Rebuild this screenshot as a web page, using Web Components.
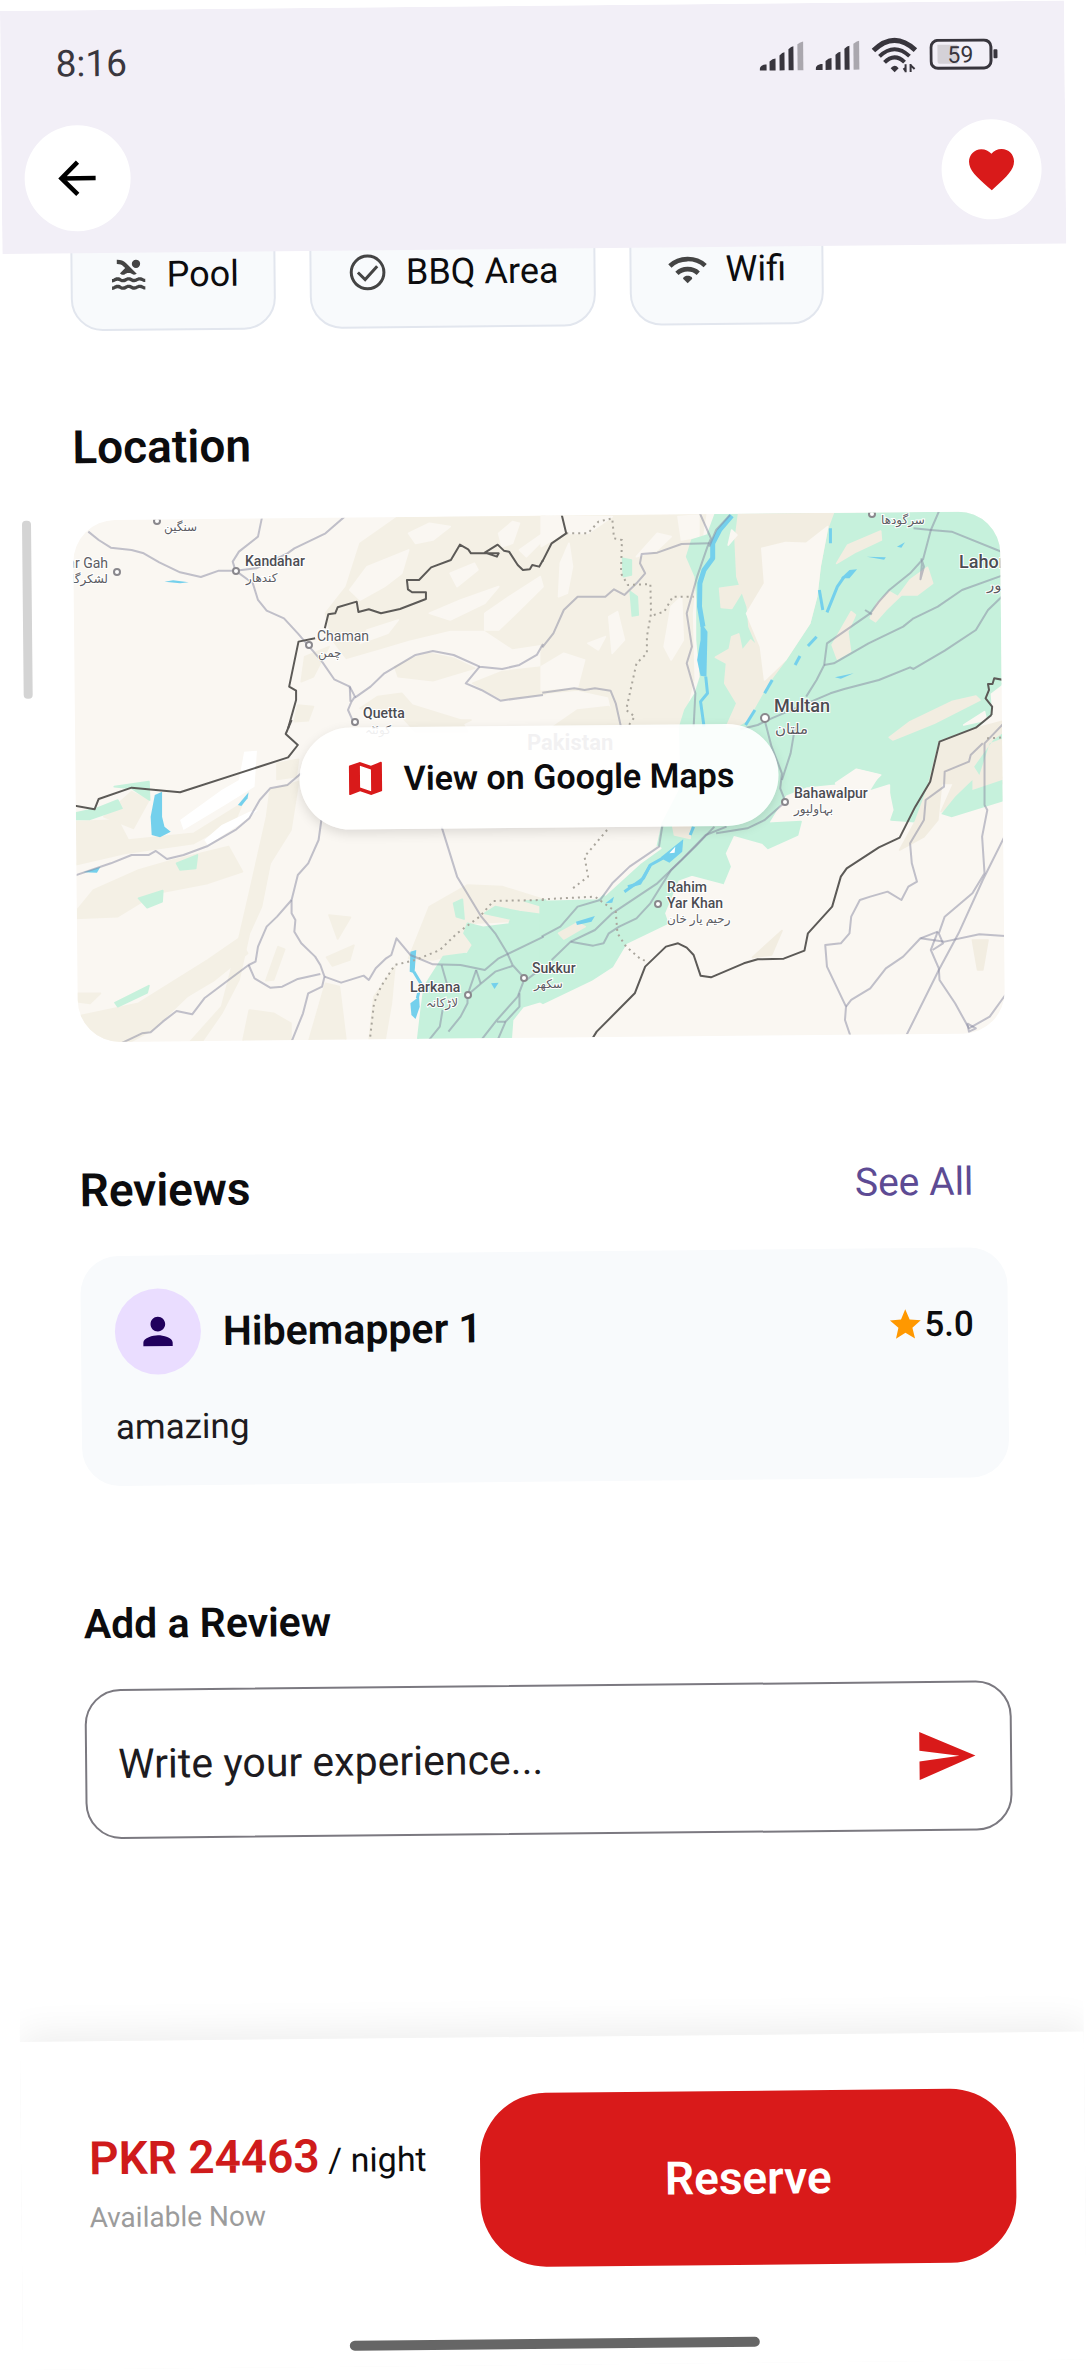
<!DOCTYPE html>
<html lang="en">
<head>
<meta charset="utf-8">
<meta name="viewport" content="width=device-width, initial-scale=1">
<title>Listing details</title>
<style>
  body {
    margin: 0;
    padding: 11px 22px 0 0;
    overflow-x: hidden;
    background: #fff;
    color: #0c0c0e;
    font-family: Roboto, "Noto Sans", "DejaVu Sans", sans-serif;
    --accent: #d91a1a;
    --card: #f8fafc;
    --gutter: 68px;
  }
</style>
</head>
<body>

<phone-screen>
  <top-bar slot="top"></top-bar>

  <amenity-list>
    <amenity-chip icon="pool">Pool</amenity-chip>
    <amenity-chip icon="check">BBQ Area</amenity-chip>
    <amenity-chip icon="wifi">Wifi</amenity-chip>
  </amenity-list>

  <page-section class="location">
    <span slot="title">Location</span>
    <location-map>View on Google Maps</location-map>
  </page-section>

  <page-section class="reviews">
    <span slot="title">Reviews</span>
    <text-link slot="action">See All</text-link>
    <review-card name="Hibemapper 1" rating="5.0">amazing</review-card>
  </page-section>

  <review-form>Add a Review</review-form>

  <booking-bar slot="bottom" price="PKR 24463" status="Available Now">Reserve</booking-bar>
</phone-screen>

<script>
const ICONS = {
  back: '<path d="M12 4.8L4.8 12l7.2 7.2M5 12h15" fill="none" stroke="currentColor" stroke-width="2"/>',
  heart: '<path d="M12 21.35l-1.45-1.32C5.4 15.36 2 12.28 2 8.5 2 5.42 4.42 3 7.5 3c1.74 0 3.41.81 4.5 2.09C13.09 3.81 14.76 3 16.5 3 19.58 3 22 5.42 22 8.5c0 3.78-3.4 6.86-8.55 11.54L12 21.35z"/>',
  pool: '<path d="M22 21c-1.11 0-1.73-.37-2.18-.64-.37-.22-.6-.36-1.15-.36-.56 0-.78.13-1.15.36-.46.27-1.07.64-2.18.64s-1.73-.37-2.18-.64c-.37-.22-.6-.36-1.15-.36-.56 0-.78.13-1.15.36-.46.27-1.08.64-2.19.64-1.11 0-1.73-.37-2.18-.64-.37-.23-.6-.36-1.15-.36s-.78.13-1.15.36c-.46.27-1.08.64-2.19.64v-2c.56 0 .78-.13 1.15-.36.45-.27 1.07-.64 2.18-.64s1.73.37 2.18.64c.37.23.59.36 1.15.36.56 0 .78-.13 1.15-.36.45-.27 1.07-.64 2.18-.64 1.11 0 1.73.37 2.18.64.37.22.6.36 1.15.36s.78-.13 1.15-.36c.45-.27 1.07-.64 2.18-.64s1.73.37 2.18.64c.37.23.59.36 1.15.36v2zm0-4.5c-1.11 0-1.73-.37-2.18-.64-.37-.22-.6-.36-1.15-.36-.56 0-.78.13-1.15.36-.45.27-1.07.64-2.18.64s-1.73-.37-2.18-.64c-.37-.22-.6-.36-1.15-.36-.56 0-.78.13-1.15.36-.45.27-1.07.64-2.18.64s-1.73-.37-2.18-.64c-.37-.22-.6-.36-1.15-.36s-.78.13-1.15.36c-.47.27-1.09.64-2.2.64v-2c.56 0 .78-.13 1.15-.36.45-.27 1.07-.64 2.18-.64s1.73.37 2.18.64c.37.22.6.36 1.15.36.56 0 .78-.13 1.15-.36.45-.27 1.07-.64 2.18-.64s1.73.37 2.18.64c.37.22.6.36 1.15.36s.78-.13 1.15-.36c.45-.27 1.07-.64 2.18-.64s1.73.37 2.18.64c.37.22.6.36 1.15.36v2zM8.67 12c.56 0 .78-.13 1.15-.36.46-.27 1.08-.64 2.19-.64 1.11 0 1.73.37 2.18.64.37.22.6.36 1.15.36s.78-.13 1.15-.36c.12-.07.26-.15.41-.23L10.48 5C8.93 3.45 7.5 2.99 5 3v2.5c1.82-.01 2.89.39 4 1.5l1 1-3.25 3.25c.31.12.56.27.77.39.37.23.59.36 1.15.36z"/><circle cx="16.5" cy="5.5" r="2.5"/>',
  check: '<circle cx="12" cy="12" r="9.8" fill="none" stroke="currentColor" stroke-width="1.8"/><path d="M6.2 12l4.3 4.3 7.3-8" fill="none" stroke="currentColor" stroke-width="1.8"/>',
  wifi: '<path d="M1.4 9.9c5.8-5.4 15.400-5.4 21.200 0M5.600 14.400c3.500-3.300 9.300-3.300 12.800 0" fill="none" stroke="currentColor" stroke-width="2.800"/><path d="M12 20.400l-2.600-2.600c-.6-.9.9-2 2.600-2s3.200 1.100 2.600 2z"/>',
  map: '<path d="M20.5 3l-.16.03L15 5.1 9 3 3.36 4.9c-.21.07-.36.25-.36.48V20.5c0 .28.22.5.5.5l.16-.03L9 18.9l6 2.1 5.64-1.9c.21-.07.36-.25.36-.48V3.5c0-.28-.22-.5-.5-.5zM15 19l-6-2.11V5l6 2.11V19z"/>',
  person: '<path d="M12 12c2.21 0 4-1.79 4-4s-1.79-4-4-4-4 1.79-4 4 1.79 4 4 4zm0 2c-2.67 0-8 1.34-8 4v2h16v-2c0-2.66-5.33-4-8-4z"/>',
  star: '<path d="M12 17.27L18.18 21l-1.64-7.03L22 9.24l-7.19-.61L12 2 9.19 8.63 2 9.24l5.46 4.73L5.82 21z"/>',
  send: '<path d="M2.01 21L23 12 2.01 3 2 10l15 2-15 2z"/>'
};

function icon(name, size) {
  return `<svg width="${size}" height="${size}" viewBox="0 0 24 24" fill="currentColor" aria-hidden="true">${ICONS[name]}</svg>`;
}

class PhoneScreen extends HTMLElement {
  constructor() {
    super();
    this.attachShadow({ mode: 'open' }).innerHTML = `
      <style>
        :host {
          display: flex;
          flex-direction: column;
          overflow: clip;
          background: #fff;
          transform: rotate(-0.56deg);
          transform-origin: 0 0;
        }
        /* the scrolled content slides under the top bar */
        main {
          display: flex;
          flex-direction: column;
          margin-top: -34px;
          padding: 0 69px 202px var(--gutter);
        }
        ::slotted(.location) { margin-top: 88px; --head-gap: 45px; }
        ::slotted(.reviews) { margin-top: 120px; --head-gap: 38px; }
        ::slotted(review-form) { margin-top: 114px; }
      </style>
      <slot name="top"></slot>
      <main><slot></slot></main>
      <slot name="bottom"></slot>
    `;
  }
}

class StatusBar extends HTMLElement {
  constructor() {
    super();
    const signal = `
      <svg width="44" height="30" viewBox="0 0 44 30" fill="#38353d" aria-hidden="true">
        <path d="M0 29c0-4 2-6 7-6v6zM10 20q3-3 6-3v12h-6zM20 14q3-3 5-3v18h-5zM29 8q3-3 5-3v24h-5z"/>
        <path d="M38 3q3-2 6-3v29h-6z" fill="#aaa7ae"/>
      </svg>`;
    this.attachShadow({ mode: 'open' }).innerHTML = `
      <style>
        :host {
          display: flex;
          align-items: center;
          gap: 12px;
          height: 106px;
          padding: 0 65px 0 55px;
        }
        time { flex: 1; font-size: 37px; color: #3a373e; }
        svg { display: block; }
      </style>
      <time>8:16</time>
      ${signal}
      ${signal}
      <svg width="46" height="36" viewBox="0 0 46 36" fill="none" stroke="#38353d" aria-hidden="true">
        <path d="M2 13Q23-7 44 13" stroke-width="5"/>
        <path d="M8 19Q23 5 38 19" stroke-width="4"/>
        <path d="M13 25Q23 15 33 25" stroke-width="4"/>
        <path d="M23 35l-4-4q4-5 8 0z" fill="#38353d" stroke="none"/>
        <path d="M34 27v8M34 34l-2-3M39 35v-8M39 28l4 4" stroke-width="2"/>
      </svg>
      <svg width="70" height="32" viewBox="0 0 70 32" role="img" aria-label="Battery">
        <rect x="1.5" y="1.5" width="60" height="28" rx="7" fill="none" stroke="#38353d" stroke-width="3"/>
        <path d="M8 6h20v19H10q-2 0-2-2z" fill="#d4d1d7"/>
        <rect x="64" y="11" width="4" height="9" rx="1" fill="#38353d"/>
        <text x="31" y="24" font-size="23" text-anchor="middle" fill="#38353d">59</text>
      </svg>
    `;
  }
}

class IconButton extends HTMLElement {
  connectedCallback() {
    const root = this.shadowRoot || this.attachShadow({ mode: 'open' });
    root.innerHTML = `
      <style>
        :host { display: block; color: #000; --size: 106px; }
        button {
          display: grid;
          place-items: center;
          width: var(--size);
          height: var(--size);
          padding: 0;
          border: 0;
          border-radius: 50%;
          background: #fff;
          color: inherit;
        }
      </style>
      <button type="button" aria-label="${this.getAttribute('label')}">${icon(this.getAttribute('icon'), 54)}</button>
    `;
  }
}

class TopBar extends HTMLElement {
  constructor() {
    super();
    this.attachShadow({ mode: 'open' }).innerHTML = `
      <style>
        :host { display: block; position: relative; z-index: 1; background: #f2eff7; }
        nav {
          display: flex;
          align-items: center;
          justify-content: space-between;
          padding: 9px 24px 22px 23px;
        }
        .like { color: var(--accent); --size: 100px; }
      </style>
      <status-bar></status-bar>
      <nav>
        <icon-button icon="back" label="Back"></icon-button>
        <icon-button class="like" icon="heart" label="Remove from favourites"></icon-button>
      </nav>
    `;
  }
}

class AmenityList extends HTMLElement {
  constructor() {
    super();
    this.attachShadow({ mode: 'open' }).innerHTML = `
      <style>
        :host { display: flex; flex-wrap: wrap; gap: 34px; }
      </style>
      <slot></slot>
    `;
  }
}

class AmenityChip extends HTMLElement {
  connectedCallback() {
    const root = this.shadowRoot || this.attachShadow({ mode: 'open' });
    root.innerHTML = `
      <style>
        :host {
          display: flex;
          align-items: center;
          gap: 18px;
          box-sizing: border-box;
          height: 112px;
          padding: 0 35px 0 36px;
          border: 2px solid #e2e6ee;
          border-radius: 32px;
          background: #f8fafc;
          font-size: 36px;
        }
        svg { color: #444; }
      </style>
      ${icon(this.getAttribute('icon'), 40)}
      <span><slot></slot></span>
    `;
  }
}

class PageSection extends HTMLElement {
  constructor() {
    super();
    this.attachShadow({ mode: 'open' }).innerHTML = `
      <style>
        :host { display: block; }
        header {
          display: flex;
          align-items: center;
          justify-content: space-between;
          margin-bottom: var(--head-gap);
        }
        h2 { margin: 0; font-size: 46px; font-weight: 600; line-height: 56px; }
      </style>
      <header>
        <h2><slot name="title"></slot></h2>
        <slot name="action"></slot>
      </header>
      <slot></slot>
    `;
  }
}

class TextLink extends HTMLElement {
  constructor() {
    super();
    this.attachShadow({ mode: 'open' }).innerHTML = `
      <style>
        :host { display: block; padding-right: 33px; }
        a { font-size: 39px; color: #5d4b94; text-decoration: none; }
      </style>
      <a href="#reviews"><slot></slot></a>
    `;
  }
}

// Map artwork, one entry per tile: origin plus polygons and lines in tile units.
const TILES = [
  {
    x: 0, y: 400,
    hill: [
      '940,640 1000,560 1040,430 1150,350 1575,345 1575,730 1480,745 1400,690 1300,690 1180,720 1100,745 1000,775 960,720',
      '1140,800 1200,772 1240,760 1310,775 1370,805 1250,842 1150,830', '1365,850 1450,815 1575,800 1575,882 1450,897',
      '1040,925 1090,890 1160,880 1190,915 1330,960 1350,995 1200,995 1160,950', '880,770 950,740 905,830 870,845', '860,915 905,920 890,962 850,965'
    ],
    land: [
      '1010,570 1060,500 1180,450 1160,520 1110,560 1040,600', '1180,400 1240,370 1300,380 1250,420 1200,430', '1240,640 1330,600 1440,560 1400,610 1300,660',
      '1400,640 1470,590 1560,530 1568,560 1500,630 1440,690 1400,690', '1300,520 1370,490 1380,510 1320,560', '1060,690 1150,660 1120,700 1040,730',
      '1440,400 1480,365 1500,370 1480,430 1450,440', '1500,450 1568,400 1568,420 1520,470'
    ],
    water: ['475,545 500,541 545,547 520,550'],
    road: [
      '255,395 285,420 320,443 380,450 415,460 460,487 520,517 580,531 632,512 680,512', '680,512 672,485 690,455 745,410 757,350',
      '680,512 740,505 830,460 850,445 940,400 995,350', '680,512 730,550 745,600 770,632 820,655 860,700 893,740 930,785 965,838 1010,860 1025,890 1015,905 1005,930 1020,965',
      '1010,860 1012,905', '1025,893 1070,860 1110,820 1200,765 1250,753 1310,765 1385,800 1450,807 1500,795 1550,765 1568,732', '1385,800 1345,850 1390,870 1445,902 1568,885'
    ],
    border: ['1568,480 1557,500 1537,495 1530,508 1510,510 1495,495 1470,455 1455,452 1437,434 1400,458 1435,470 1440,460 1360,460 1352,448 1328,434 1302,480 1245,502 1210,540 1175,540 1178,568 1190,577 1230,577 1230,597 1155,627 1100,640 1065,628 1035,636 1030,605 975,622 968,640 948,643 938,685', '910,715 862,725 835,860 855,872 855,900 832,985']
  },
  {
    x: 543, y: 480,
    hill: ['-5,100 470,100 440,300 430,400 435,600 400,740 210,740 190,650 100,630 -5,640', '30,740 100,690 190,680 220,740'],
    land: [
      '50,250 75,190 85,260 70,340 45,350', '190,410 215,395 235,480 200,520', '370,380 400,350 405,480 370,540 350,500', '-5,560 60,520 120,540 100,620 -5,630',
      '-5,100 60,105 60,160 -5,200', '60,110 200,110 130,160 70,160', '270,230 330,160 370,170 330,210', '390,110 450,105 450,170 400,180', '130,490 180,470 160,510'
    ],
    green: [
      '500,95 1340,90 1340,600 1290,640 1295,705 1250,745 1145,785 1118,910 560,910 395,740 410,690 440,640 455,590 445,480 445,360 440,290 415,230 430,180 475,165',
      '230,235 255,240 255,285 232,290', '252,335 272,350 275,405 258,408'
    ],
    sand: [
      '565,100 838,100 820,150 800,260 790,350 770,430 700,540 650,610 590,720 560,740 530,740 560,670 525,610 530,550 498,532 538,508 545,470 565,462 575,512 600,480 620,500 595,440 590,380 560,290 555,180',
      '510,325 572,316 575,335 545,385 515,382', '848,250 880,195 975,153 977,180 905,215', '945,415 965,370 1000,335 1025,350 1060,300 1110,262 1125,310 1080,345 1035,345 990,390 960,425',
      '835,495 890,395 902,405 880,455 888,515 850,537', '1000,772 1060,725 1180,665 1250,648 1262,660 1130,730 1010,780', '1145,785 1250,745 1300,760 1340,770 1340,910 1115,910'
    ],
    pale: ['632,205 700,188 760,190 822,140 800,260 790,350 770,430 700,540 640,600 628,500 588,400 640,310', '560,165 535,195 545,150', '845,910 905,868 975,885 950,910', '1215,735 1275,695 1280,720'],
    water: ['455,425 475,455 472,590 455,587 445,540 455,480', '860,295 885,270 907,268 885,295', '935,230 990,232 985,239', '1022,200 1045,187 1035,203', '843,592 897,580 860,596'],
    river: ['545,107 510,150 490,190 490,235 465,270 453,310 452,380 462,440'],
    stream: ['470,590 475,640 455,665 465,740', '830,145 830,190', '798,330 808,390', '820,397 850,320 870,290', '790,470 765,498', '742,528 728,555', '662,600 640,640', '612,690 585,735'],
    road: [
      '453,100 485,175 475,200 445,290 415,400 430,500 415,550 440,640 435,740', '-2,502 30,460 60,390 100,350 180,350 205,328 235,345 270,310 295,280 280,250 285,222 330,218 400,192 480,190',
      '540,105 500,150 480,200', '-2,638 90,625 120,630 150,625 195,632 210,670 225,740', '1143,95 1120,150 1097,240', '1095,240 1090,298 1100,260 1092,235',
      '1095,240 1060,280 1000,330 970,365 945,400 820,490 812,555 790,600 760,650', '1070,145 1120,150 1180,155 1330,218', '812,555 840,550 940,490 1040,440 1070,415 1140,380 1210,330 1330,285',
      '570,748 620,735 660,715 740,680 830,640 870,627 970,600 1060,562 1070,567 1160,512 1250,450 1285,390 1330,345', '930,390 950,403'
    ],
    border: ['-2,245 25,190 67,160 53,100', '1330,600 1303,595 1298,612 1285,612 1288,630 1278,655 1297,680 1295,705'],
    dots: ['67,160 130,160 160,125 200,115 205,175 228,180 225,280 245,315 310,312 312,400 300,470 300,520 270,550 255,620 240,690 265,710 245,740', '320,405 350,395 375,350 435,350']
  },
  {
    x: 0, y: 720,
    hill: [
      '215,580 270,510 400,450 500,420 660,380 700,455 600,490 450,520 340,590 215,595', '215,305 340,300 370,360 560,340 700,250 680,300 560,370 360,400 215,435',
      '300,290 380,215 430,240 385,325', '780,210 862,185 840,330 780,430 755,560 720,640 690,780 640,880 580,970 545,970 640,860 680,700 720,520 770,290',
      '240,970 220,890 400,850 600,720 690,655 715,700 620,780 540,830 440,930 360,975', '720,870 790,880 840,910 840,970 700,970', '890,970 940,790 980,800 1000,970', '800,130 862,118 855,170 800,178',
      '950,585 1012,592 975,657', '943,712 1022,676 1010,720 960,738', '803,680 822,688 790,780 768,782', '1190,690 1240,560 1350,495 1450,500 1575,540 1575,600 1350,610 1365,690 1250,720 1180,715',
      '1080,830 1140,740 1130,850 1110,970 1065,970', '222,820 290,820 260,850 222,845', '1230,0 1360,0 1330,15 1250,15'
    ],
    white: ['705,95 742,92 735,200 650,255 530,330 520,300 640,210 690,180', '590,360 640,315 720,275 745,270 690,315 600,375'],
    green: [
      '215,280 280,265 340,240 352,265 260,298 215,298', '330,200 430,185 432,240 380,205', '510,430 570,405 565,445 520,450', '400,535 470,512 468,545 425,563', '332,848 430,797 425,818 340,860',
      '1310,550 1335,538 1340,597 1318,590', '1205,970 1215,880 1225,800 1280,710 1350,700 1365,675 1340,640 1350,610 1395,622 1470,612 1475,597 1400,580 1430,560 1500,575 1575,585 1575,840 1510,860 1480,900 1475,970', '1515,543 1575,540 1575,562'
    ],
    water: ['447,225 468,215 468,290 475,320 493,335 462,352 438,345 435,290', '687,255 718,217 715,235 697,258', '240,457 290,440 280,458', '1185,695 1202,690 1197,760 1183,755', '1185,850 1210,830 1212,860 1200,897 1188,885', '1418,790 1440,788 1428,807'],
    stream: ['1195,755 1215,790 1205,835'],
    road: [
      '215,467 320,430 380,405 430,405 450,393 482,417 530,405 600,378 680,330 720,295 750,240 780,205 830,195 870,160', '928,300 920,360 890,430 860,465 842,540 842,580 853,600 850,635 870,670 910,710 925,735 937,770 930,800 890,820 875,880 840,970',
      '842,540 800,590 770,620 745,680 738,725 718,735 660,780 590,835 555,883 510,873 470,905 435,937 410,940 350,970', '718,735 735,775 780,803 815,800 860,777 925,762',
      '937,770 985,788 1050,767 1065,780 1085,745 1115,715 1130,705 1145,655 1185,705 1250,733 1330,735 1400,750 1440,715 1570,650', '1275,320 1320,470 1390,590 1430,640 1465,700 1480,735 1515,775',
      '1350,825 1390,790 1430,755 1480,738', '1375,750 1350,825 1350,850 1330,890 1295,935', '1375,750 1388,790', '1275,735 1290,790', '1278,870 1270,920 1235,965', '1515,775 1495,830 1435,900 1390,960', '1500,820 1500,860 1460,905 1435,965', '1435,905 1460,905', '1520,780 1570,740'
    ],
    border: ['842,0 825,42 860,75 832,112 520,217 380,203 285,237 273,268 215,257'],
    dots: ['1570,540 1425,543 1385,590 1320,640 1270,690 1200,720 1140,735 1100,800 1080,850 1068,960']
  },
  {
    x: 543, y: 720,
    green: [
      '480,55 800,55 1150,55 1118,185 1075,305 1005,300 1015,270 1000,195 940,215 970,165 910,150 850,190 760,200 700,225 650,310 745,305 735,345 650,385 635,370 550,345 525,400 540,440 520,490 430,465 390,480 350,580 360,610 240,670 200,740 140,780 0,850 -8,845 -8,545 160,540 230,480 330,380 345,310 400,200 395,20'
    ],
    sand: ['1145,65 1250,25 1340,0 1340,170 1220,220 1150,275 1190,180 1160,150 1150,200 1140,300 1100,350 1030,390 1075,305 1118,185', '45,640 100,608 122,620 60,657', '375,320 425,320 425,355 380,345', '605,712 690,632 660,705', '1240,660 1285,660 1270,750 1255,750'],
    pale: ['850,190 910,150 970,165 940,215 1000,195 1000,260 800,260', '340,385 330,380 200,490 180,525 280,430'],
    greenTop: ['1245,140 1300,60 1340,30 1340,50 1290,70 1260,165', '1190,230 1240,180 1240,210 1340,175 1340,240 1180,292 1150,282'],
    water: ['340,412 405,358 402,395 365,428 350,420', '95,605 150,588 140,605 98,615', '180,550 205,530 200,548'],
    pond: ['365,400 382,380 380,398'],
    stream: ['435,320 425,345', '350,412 310,435 280,490 245,500', '310,435 290,475 235,515'],
    road: [
      '640,0 660,80 690,160 685,205 700,245 640,300 590,325 500,340', '728,20 715,100 690,180', '530,320 470,345 400,420 330,490 200,580 150,630 80,665 25,720', '495,320 440,380 370,450 310,550 270,595 220,620 190,640 175,670 145,677 80,665',
      '345,315 335,380 250,440 200,490 165,540 100,560 50,620 -4,650', '1330,10 1275,70 1275,255 1283,270 1268,350 1275,460 1240,520 1160,590 1143,640 1155,670 1125,690',
      '1335,345 1270,480 1200,640 1143,750 1045,955', '1270,70 1235,105 1230,125 1160,155 1158,200 1105,240 1100,300 1060,370 1065,430 1080,485 1055,500 1035,540 995,515 945,530 915,540 890,590 885,640 860,670 815,675 820,740 875,860 872,900 890,955',
      '875,860 890,840 945,805 990,745 1040,710 1090,655 1140,635', '1090,655 1160,665 1260,643 1335,648', '1140,635 1120,690 1143,745 1145,780 1190,850 1230,925 1290,890 1335,825', '1225,910 1250,925 1230,935 1225,910'
    ],
    border: ['140,960 155,935 265,820 295,740 355,680 390,670 415,683 435,705 455,767 485,772 580,730 620,718 695,716 755,692 765,640 835,560 860,470 877,445 970,382 1030,353 1075,260 1118,185 1145,65 1250,23 1295,-15'],
    dots: ['-3,538 150,530 210,575 215,640 240,680 285,720 300,722', '185,330 120,410 130,470 80,510', '1340,52 1280,55']
  }
];

const AREAS = ['hill', 'land', 'white', 'green', 'sand', 'pale', 'greenTop', 'water', 'pond'];
const LINES = ['river', 'stream', 'road', 'dots', 'border'];

// [text, x, baseline, class]
const LABELS = [
  ['سنگین', 164, 531, 'ur'], ['Lashkar Gah', 108, 568, 'end thin'], ['لشکرگاه', 108, 583, 'end ur'],
  ['Kandahar', 245, 566, ''], ['کندهار', 246, 582, 'ur'], ['Chaman', 317, 641, 'thin'], ['چمن', 318, 657, 'ur'],
  ['Quetta', 363, 718, ''], ['کوئٹہ', 365, 734, 'ur'], ['سرگودھا', 881, 524, 'ur'], ['Lahore', 959, 568, 'big'], ['لاہور', 987, 590, 'ur urbig'],
  ['Pakistan', 527, 750, 'country'], ['Multan', 774, 712, 'big'], ['ملتان', 775, 734, 'ur urbig'], ['Bahawalpur', 794, 798, ''], ['بہاولپور', 794, 813, 'ur'],
  ['Rahim', 667, 892, ''], ['Yar Khan', 667, 908, ''], ['رحیم یار خان', 667, 923, 'ur'],
  ['Sukkur', 532, 973, ''], ['سکھر', 534, 988, 'ur'], ['Larkana', 410, 992, ''], ['لاڑکانہ', 458, 1007, 'end ur']
];
const PINS = [[157, 521], [117, 572], [236, 571], [309, 645], [355, 722], [872, 514], [765, 718, 4], [785, 802], [658, 904], [524, 978], [468, 995]];

class LocationMap extends HTMLElement {
  constructor() {
    super();
    this.attachShadow({ mode: 'open' }).innerHTML = `
      <style>
        :host { display: grid; position: relative; }
        .frame {
          grid-area: 1 / 1;
          aspect-ratio: 927 / 522;
          border-radius: 42px;
          overflow: hidden;
          background: #faf7f2;
        }
        .frame svg { display: block; width: 100%; height: 100%; }
        .hill { fill: #f4f0e5; }
        .land, .pale { fill: #faf7f2; }
        .white, .pond { fill: #fff; }
        .green, .greenTop { fill: #c6f1dc; }
        .sand { fill: #f2ede1; }
        .water { fill: #74d0ec; }
        .hill, .land, .white, .green, .sand, .pale {
          stroke-width: 5px;
          stroke-linejoin: round;
        }
        .hill { stroke: #f4f0e5; }
        .land, .pale { stroke: #faf7f2; }
        .green { stroke: #c6f1dc; }
        .sand { stroke: #f2ede1; }
        polyline { fill: none; vector-effect: non-scaling-stroke; stroke-linejoin: round; }
        .river { stroke: #74d0ec; stroke-width: 5px; }
        .stream { stroke: #74d0ec; stroke-width: 3px; }
        .road { stroke: #85879f; stroke-opacity: .5; stroke-width: 2px; }
        .border { stroke: #5c5a57; stroke-width: 2px; }
        .dots { stroke: #aaa69d; stroke-width: 2px; stroke-dasharray: 2 4; }
        circle { fill: #fff; stroke: #8a888d; stroke-width: 2px; }
        text {
          font-size: 14px;
          font-weight: 500;
          fill: #4c4c52;
          stroke: #fff;
          stroke-width: 2px;
          paint-order: stroke;
        }
        .thin { font-weight: 400; fill: #5c5c62; }
        .big { font-size: 18px; }
        .ur { font-size: 12px; font-weight: 400; fill: #5c5c62; }
        .urbig { font-size: 15px; }
        .end { text-anchor: end; }
        .country { font-size: 22px; font-weight: 700; fill: #77757a; stroke: none; }
        button {
          grid-area: 1 / 1;
          place-self: center;
          display: flex;
          align-items: center;
          gap: 16px;
          height: 102px;
          padding: 0 44px;
          border: 0;
          border-radius: 51px;
          background: rgba(255, 255, 255, .9);
          box-shadow: 0 4px 12px rgba(0, 0, 0, .12);
          color: #0c0c0e;
          font: 600 34px Roboto, "Noto Sans", sans-serif;
          z-index: 1;
        }
        button svg { color: var(--accent); }
        /* scroll position thumb in the page gutter */
        .thumb {
          position: absolute;
          top: 0;
          left: -51px;
          width: 9px;
          height: 178px;
          border-radius: 4px;
          background: #d4d4d4;
        }
      </style>
      <div class="thumb"></div>
      <div class="frame">
        <svg viewBox="0 0 927 522" preserveAspectRatio="xMidYMid slice" role="img" aria-label="Map of the area">
          <g transform="translate(-68 -510) rotate(.56) translate(0 -11)">
            ${AREAS.map(kind => this.layer('polygon', kind)).join('')}
            ${LINES.map(kind => this.layer('polyline', kind)).join('')}
            ${PINS.map(([x, y, r = 3]) => `<circle cx="${x}" cy="${y}" r="${r}"/>`).join('')}
            ${LABELS.map(([t, x, y, c]) => `<text x="${x}" y="${y}" class="${c}">${t}</text>`).join('')}
          </g>
        </svg>
      </div>
      <button type="button">${icon('map', 44)}<span><slot></slot></span></button>
    `;
  }

  layer(tag, kind) {
    return TILES.map(tile => `
      <g transform="translate(${tile.x} ${tile.y}) scale(.3463 .3333)">
        ${(tile[kind] || []).map(points => `<${tag} class="${kind}" points="${points}"/>`).join('')}
      </g>`).join('');
  }
}

class ReviewCard extends HTMLElement {
  connectedCallback() {
    const root = this.shadowRoot || this.attachShadow({ mode: 'open' });
    root.innerHTML = `
      <style>
        :host {
          display: block;
          box-sizing: border-box;
          padding: 33px 34px 36px;
          border-radius: 38px;
          background: var(--card);
        }
        header { display: flex; align-items: center; }
        .avatar {
          display: grid;
          place-items: center;
          width: 86px;
          height: 86px;
          margin-right: 22px;
          border-radius: 50%;
          background: #eaddff;
          color: #21005d;
        }
        h3 { flex: 1; margin: 0; font-size: 41px; font-weight: 600; line-height: 48px; }
        .rating { display: flex; align-items: center; font-size: 35px; font-weight: 500; }
        .rating svg { color: #ff9800; }
        p { margin: 31px 0 0; font-size: 35px; line-height: 44px; color: #1d1b20; }
      </style>
      <header>
        <span class="avatar">${icon('person', 44)}</span>
        <h3>${this.getAttribute('name')}</h3>
        <span class="rating">${icon('star', 37)}${this.getAttribute('rating')}</span>
      </header>
      <p><slot></slot></p>
    `;
  }
}

class ReviewForm extends HTMLElement {
  constructor() {
    super();
    this.attachShadow({ mode: 'open' }).innerHTML = `
      <style>
        :host { display: block; }
        label {
          display: block;
          margin-bottom: 41px;
          font-size: 41px;
          font-weight: 600;
          line-height: 48px;
        }
        .field {
          display: flex;
          align-items: center;
          box-sizing: border-box;
          height: 150px;
          padding: 0 32px 0 31px;
          border: 2px solid #7b7980;
          border-radius: 36px;
        }
        input {
          flex: 1;
          min-width: 0;
          padding: 0;
          border: 0;
          outline: 0;
          background: none;
          font: 41px Roboto, "Noto Sans", sans-serif;
          color: #1d1b20;
        }
        input::placeholder { color: #1d1b20; opacity: 1; }
        button { display: flex; padding: 0; border: 0; background: none; color: var(--accent); }
      </style>
      <label for="review"><slot></slot></label>
      <div class="field">
        <input id="review" type="text" placeholder="Write your experience...">
        <button type="button" aria-label="Send">${icon('send', 64)}</button>
      </div>
    `;
  }
}

class BookingBar extends HTMLElement {
  connectedCallback() {
    const root = this.shadowRoot || this.attachShadow({ mode: 'open' });
    root.innerHTML = `
      <style>
        :host {
          display: block;
          padding: 56px 69px 16px var(--gutter);
          background: #fff;
          box-shadow: 0 -8px 36px rgba(0, 0, 0, .07);
        }
        .row { display: flex; align-items: center; gap: 32px; }
        .price { flex: 1; white-space: nowrap; }
        p { margin: 0; font-size: 34px; line-height: 54px; }
        strong { font-size: 46px; font-weight: 600; color: #cf1b1b; }
        small { display: block; margin-top: 11px; padding-bottom: 2px; font-size: 28px; line-height: 36px; color: #9c9c9c; }
        button {
          flex: 0 1 536px;
          height: 174px;
          border: 0;
          border-radius: 66px;
          background: var(--accent);
          color: #fff;
          font: 600 46px Roboto, "Noto Sans", sans-serif;
        }
        .home {
          width: 410px;
          height: 10px;
          margin: 72px auto 0;
          border-radius: 5px;
          background: #666;
        }
      </style>
      <div class="row">
        <div class="price">
          <p><strong>${this.getAttribute('price')}</strong> / night</p>
          <small>${this.getAttribute('status')}</small>
        </div>
        <button type="button"><slot></slot></button>
      </div>
      <div class="home"></div>
    `;
  }
}

customElements.define('status-bar', StatusBar);
customElements.define('icon-button', IconButton);
customElements.define('top-bar', TopBar);
customElements.define('amenity-list', AmenityList);
customElements.define('amenity-chip', AmenityChip);
customElements.define('page-section', PageSection);
customElements.define('text-link', TextLink);
customElements.define('location-map', LocationMap);
customElements.define('review-card', ReviewCard);
customElements.define('review-form', ReviewForm);
customElements.define('booking-bar', BookingBar);
customElements.define('phone-screen', PhoneScreen);
</script>
</body>
</html>
